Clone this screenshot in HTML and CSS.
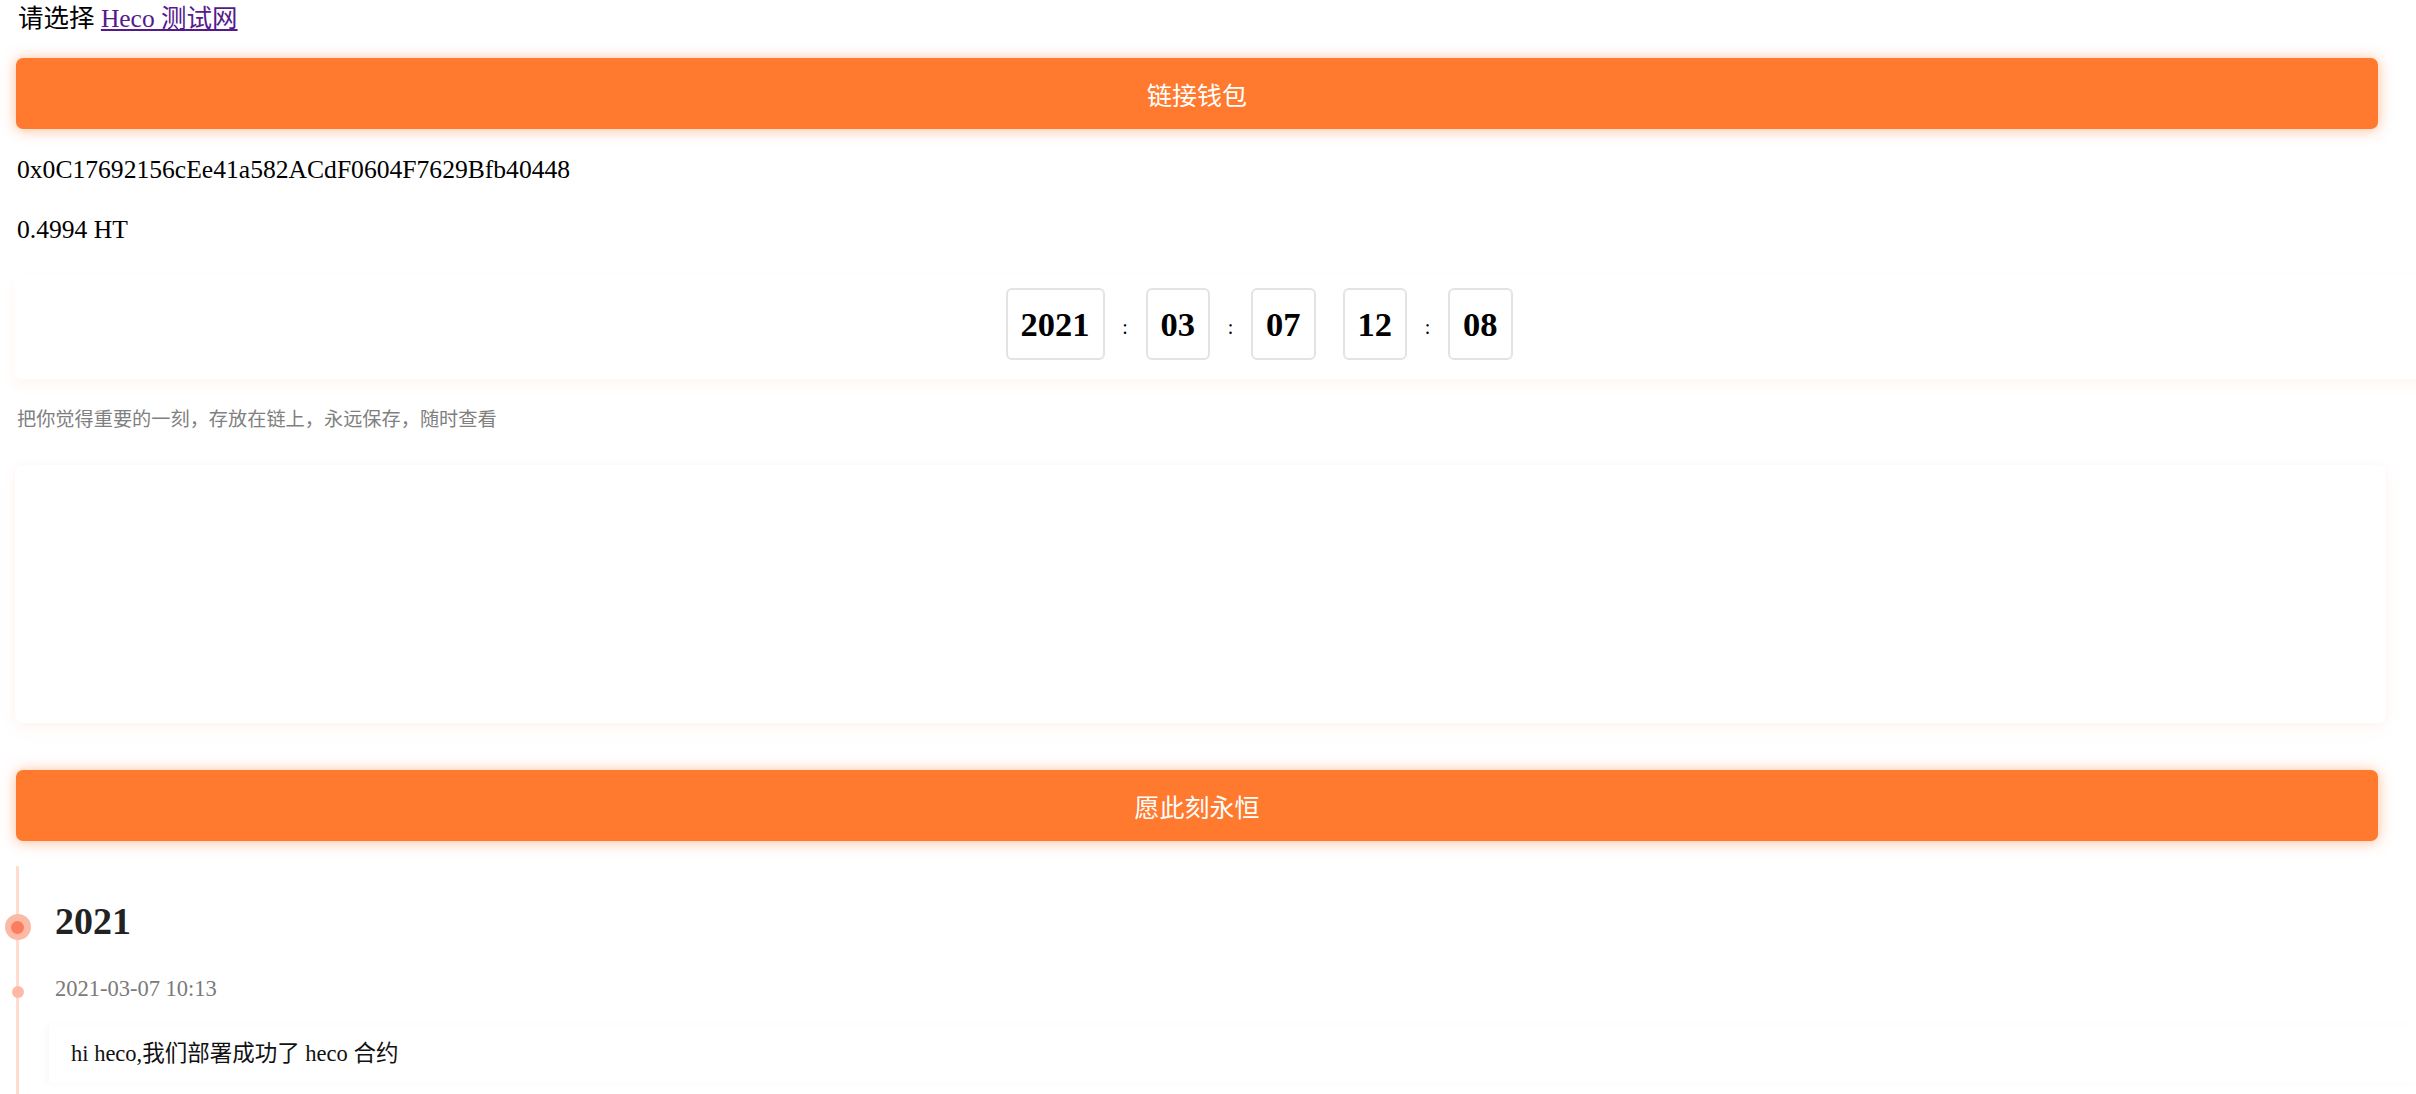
FILE: index.html
```html
<!DOCTYPE html>
<html lang="zh">
<head>
<meta charset="utf-8">
<title>Heco</title>
<link rel="stylesheet" href="styles.css">
</head>
<body>
<div class="page">
  <div class="net">请选择 <a class="net-link" href="#">Heco 测试网</a></div>
  <button class="btn btn-connect">链接钱包</button>
  <p class="addr">0x0C17692156cEe41a582ACdF0604F7629Bfb40448</p>
  <p class="bal">0.4994 HT</p>
  <div class="clock">
    <span class="seg">2021</span><span class="colon">:</span><span class="seg">03</span><span class="colon">:</span><span class="seg">07</span>
    <span class="seg">12</span><span class="colon">:</span><span class="seg">08</span>
  </div>
  <p class="tip">把你觉得重要的一刻，存放在链上，永远保存，随时查看</p>
  <div class="editor"></div>
  <button class="btn btn-save">愿此刻永恒</button>
  <div class="timeline">
    <span class="dot-big"><span class="dot-core"></span></span>
    <h2 class="year">2021</h2>
    <span class="dot-small"></span>
    <div class="date">2021-03-07 10:13</div>
    <div class="msg">hi heco,我们部署成功了 heco 合约</div>
  </div>
</div>
</body>
</html>
```
FILE: styles.css
```css
html { overflow: hidden; }
body {
  margin: 0;
  background: #fff;
  color: #000;
  font-family: "Liberation Serif", "Noto Sans CJK SC", serif;
}
.page {
  padding-left: 16px;
}
.net {
  margin-left: 2px;
  font-size: 25.5px;
  line-height: 37px;
  height: 37px;
}
.net-link { color: #551a8b; text-decoration: underline; }
.btn {
  display: block;
  width: 2362px;
  height: 71px;
  border: 0;
  border-radius: 7px;
  background: #ff7a2e;
  color: #fff;
  font-family: "Noto Sans CJK SC", "Noto Sans", sans-serif;
  font-size: 25px;
  padding: 0;
  box-shadow: 0 1px 14px rgba(255, 122, 46, 0.5);
}
.btn-connect { margin-top: 21px; }
.btn-save { margin-top: 47px; }
.addr, .bal {
  margin: 0;
  font-size: 25.6px;
  line-height: 30px;
  margin-left: 1px;
}
.addr { margin-top: 26px; }
.bal { margin-top: 30px; }
.clock {
  margin-top: 30px;
  margin-left: -1px;
  width: 2488px;
  height: 104px;
  box-sizing: border-box;
  padding-top: 13px;
  display: flex;
  justify-content: center;
  align-items: flex-start;
  background: #fff;
  border-radius: 6px;
  box-shadow: 0 6px 14px rgba(255, 150, 110, 0.09);
}
.seg {
  display: block;
  margin: 0 13.5px;
  height: 72px;
  box-sizing: border-box;
  padding: 0 13px;
  border: 2px solid #e3e3e3;
  border-radius: 6px;
  font-weight: bold;
  font-size: 34.5px;
  line-height: 68px;
}
.colon {
  display: block;
  width: 14px;
  text-align: center;
  font-size: 20px;
  line-height: 78px;
}
.tip {
  margin: 27px 0 0 1px;
  font-size: 19.2px;
  line-height: 28px;
  color: #808080;
}
.editor {
  margin-top: 31px;
  margin-left: -1px;
  width: 2371px;
  height: 258px;
  border-radius: 8px;
  background: #fff;
  box-shadow: 0 6px 16px rgba(255, 150, 110, 0.08), 0 0 6px rgba(240, 200, 180, 0.12);
}
.timeline {
  position: relative;
  margin-top: 25px;
  border-left: 3px solid #ffdcd0;
  padding-top: 33px;
  padding-left: 36px;
  min-height: 300px;
}
.dot-big {
  position: absolute;
  left: -14.5px;
  top: 48px;
  width: 26px;
  height: 26px;
  border-radius: 50%;
  background: #fcb9a6;
  display: flex;
  align-items: center;
  justify-content: center;
}
.dot-core {
  width: 13px;
  height: 13px;
  border-radius: 50%;
  background: #fb7d5e;
}
.dot-small {
  position: absolute;
  left: -7.5px;
  top: 120px;
  width: 12px;
  height: 12px;
  border-radius: 50%;
  background: #fdbaa6;
}
.year {
  margin: 0;
  font-size: 38px;
  line-height: 44px;
  font-weight: bold;
  color: #222;
}
.date {
  margin-top: 31px;
  font-size: 22.5px;
  line-height: 30px;
  color: #7a7a7a;
}
.msg {
  margin-top: 21px;
  margin-left: -6px;
  padding: 14px 22px;
  font-size: 22.5px;
  line-height: 30px;
  color: #111;
  background: #fff;
  box-shadow: -3px 0 5px rgba(235, 220, 210, 0.18);
}
```
